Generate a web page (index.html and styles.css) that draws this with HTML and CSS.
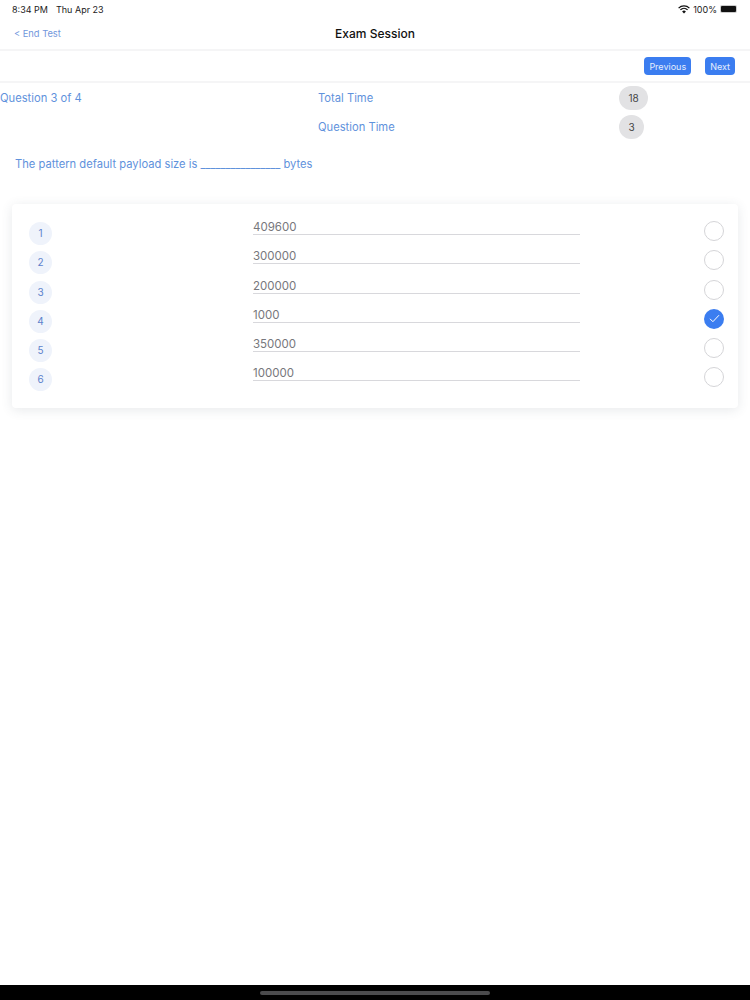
FILE: index.html
```html
<!DOCTYPE html>
<html>
<head>
	<meta charset="utf-8" />
	<title>Exam Session</title>
	<link rel="stylesheet" href="styles.css">
</head>
<body>
	<div class="status">
		<div class="status_left"><span>8:34 PM</span><span>Thu Apr 23</span></div>
		<div class="status_right">
			<svg class="wifi" width="12" height="9" viewBox="0 0 12 9">
				<path d="M0.6 3.1a7.8 7.8 0 0 1 10.8 0M2.4 4.9a5.2 5.2 0 0 1 7.2 0" fill="none" stroke="#111" stroke-width="1.3" />
				<path d="M4.1 6.5a2.7 2.7 0 0 1 3.8 0L6 8.6z" fill="#111" />
			</svg>
			<span>100%</span>
			<div class="battery"><div class="battery_fill"></div></div>
		</div>
	</div>

	<div class="nav">
		<a class="back">&lt; End Test</a>
		<div class="title">Exam Session</div>
	</div>

	<div class="toolbar">
		<button class="btn">Previous</button>
		<button class="btn">Next</button>
	</div>

	<div class="info">
		<div class="info_label">Question 3 of 4</div>
		<div class="info_label">Total Time</div>
		<div><span class="pill">18</span></div>
		<div></div>
		<div class="info_label">Question Time</div>
		<div><span class="pill">3</span></div>
	</div>

	<p class="question">The pattern default payload size is <span class="blank">________________</span> bytes</p>

	<div class="card">
		<div class="answer">
			<span class="num">1</span>
			<span class="value">409600</span>
			<span class="radio"></span>
		</div>
		<div class="answer">
			<span class="num">2</span>
			<span class="value">300000</span>
			<span class="radio"></span>
		</div>
		<div class="answer">
			<span class="num">3</span>
			<span class="value">200000</span>
			<span class="radio"></span>
		</div>
		<div class="answer">
			<span class="num">4</span>
			<span class="value">1000</span>
			<span class="radio checked">
				<svg width="11" height="9" viewBox="0 0 11 9"><path d="M1 4.8l2.9 2.9L10 1.2" fill="none" stroke="#fff" stroke-width="1" /></svg>
			</span>
		</div>
		<div class="answer">
			<span class="num">5</span>
			<span class="value">350000</span>
			<span class="radio"></span>
		</div>
		<div class="answer">
			<span class="num">6</span>
			<span class="value">100000</span>
			<span class="radio"></span>
		</div>
	</div>

	<div class="home_bar"><div class="home_line"></div></div>
</body>
</html>
```

FILE: styles.css
```css
*{
	box-sizing: border-box;
}
html,body{
	height: 100%;
}
body{
	margin: 0;
	display: flex;
	flex-direction: column;
	background: #fff;
	font-family: Inter, "Liberation Sans", sans-serif;
	overflow: hidden;
}

/* status bar */
.status{
	height: 18px;
	padding: 0 13px 0 12px;
	display: flex;
	justify-content: space-between;
	align-items: center;
	font-size: 9px;
	color: #222;
}
.status_left span{
	margin-right: 8px;
}
.status_right{
	display: flex;
	align-items: center;
	gap: 3px;
}
.battery{
	width: 17px;
	height: 8px;
	padding: 1px;
	border-radius: 2px;
	background: #ccc;
}
.battery_fill{
	height: 100%;
	border-radius: 1px;
	background: #111;
}

/* nav */
.nav{
	height: 33px;
	padding: 0 14px;
	display: flex;
	align-items: center;
	position: relative;
	border-bottom: 2px solid #f5f5f6;
}
.back{
	font-size: 9.3px;
	color: #7196dc;
}
.title{
	position: absolute;
	left: 0;
	right: 0;
	text-align: center;
	font-size: 12px;
	font-weight: 500;
	color: #111;
}

/* toolbar */
.toolbar{
	height: 32px;
	padding: 0 15px 0 0;
	display: flex;
	justify-content: flex-end;
	align-items: center;
	gap: 14px;
	border-bottom: 2px solid #f5f5f6;
}
.btn{
	height: 18px;
	padding: 0 5px;
	border: 0;
	border-radius: 4px;
	background: #3b7df0;
	color: #e4edfd;
	font-family: inherit;
	font-size: 9px;
}

/* timers */
.info{
	display: grid;
	grid-template-columns: 318px 301px 1fr;
	grid-auto-rows: 29px;
	align-items: center;
	font-size: 11.2px;
	color: #5f92dc;
}
.pill{
	display: inline-block;
	min-width: 24px;
	padding: 0 9.5px;
	height: 24px;
	line-height: 24px;
	border-radius: 12px;
	background: #e2e2e4;
	color: #444;
	font-size: 10px;
	text-align: center;
}

.question{
	margin: 15px 0 0 15px;
	font-size: 11.2px;
	line-height: 16px;
	color: #5f92dc;
}
.blank{
	letter-spacing: -0.12px;
}

/* answers */
.card{
	margin: 32px 12px 0;
	height: 204px;
	padding: 12px 14px 0 17px;
	border-radius: 4px;
	background: #fff;
	box-shadow: 0 2px 12px rgba(60,70,90,0.12);
}
.answer{
	height: 29.3px;
	display: grid;
	grid-template-columns: 224px 327px 1fr;
	align-items: start;
}
.num{
	width: 23px;
	height: 23px;
	margin-top: 6px;
	line-height: 23px;
	border-radius: 50%;
	background: #eff3fb;
	color: #5d82cc;
	font-size: 10px;
	text-align: center;
}
.value{
	height: 19px;
	line-height: 22px;
	border-bottom: 1px solid #d8d8dc;
	color: #77777c;
	font-size: 11.5px;
}
.radio{
	justify-self: end;
	width: 20px;
	height: 20px;
	margin-top: 5px;
	display: flex;
	align-items: center;
	justify-content: center;
	border-radius: 50%;
	border: 1px solid #d5d5d8;
}
.checked{
	border: 0;
	background: #3b7df0;
}

/* home indicator */
.home_bar{
	margin-top: auto;
	height: 15px;
	display: flex;
	justify-content: center;
	align-items: center;
	background: #000;
}
.home_line{
	width: 230px;
	height: 4px;
	border-radius: 2px;
	background: #4b4b4d;
}
```
